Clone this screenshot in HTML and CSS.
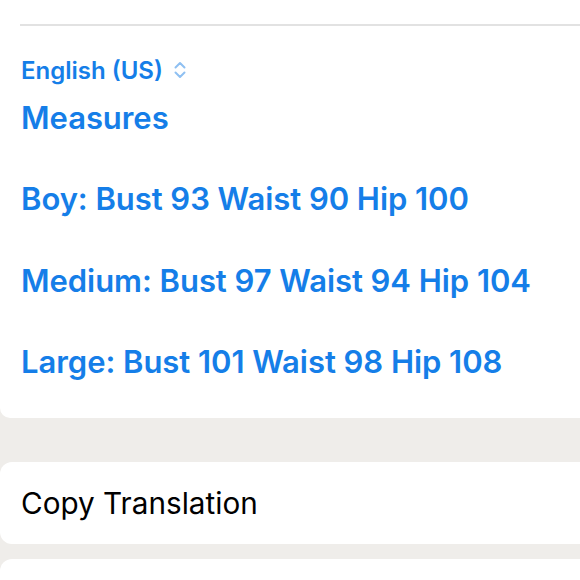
FILE: index.html
```html
<!DOCTYPE html>
<html>
<head>
<meta charset="utf-8">
<link rel="stylesheet" href="styles.css">
</head>
<body>
<div class="page">
  <section class="card top">
    <div class="divider"></div>
    <div class="lang">
      <span>English (US)</span>
      <svg class="chev" width="14" height="20" viewBox="0 0 14 20">
        <path d="M2.5 7.5 L7 3 L11.5 7.5" fill="none" stroke="#8fc0f2" stroke-width="2" stroke-linecap="round" stroke-linejoin="round"/>
        <path d="M2.5 12.5 L7 17 L11.5 12.5" fill="none" stroke="#8fc0f2" stroke-width="2" stroke-linecap="round" stroke-linejoin="round"/>
      </svg>
    </div>
    <div class="translation">
      <p>Measures</p>
      <p class="blank">&nbsp;</p>
      <p>Boy: Bust 93 Waist 90 Hip 100</p>
      <p class="blank">&nbsp;</p>
      <p>Medium: Bust 97 Waist 94 Hip 104</p>
      <p class="blank">&nbsp;</p>
      <p>Large: Bust 101 Waist 98 Hip 108</p>
    </div>
  </section>
  <section class="card action">
    <span>Copy Translation</span>
  </section>
  <section class="card next"></section>
</div>
</body>
</html>
```
FILE: styles.css
```css
html, body {
  margin: 0;
  padding: 0;
  background: #efedea;
  height: 100%;
  overflow: hidden;
}
.page {
  display: flex;
  flex-direction: column;
  width: 580px;
  height: 580px;
  font-family: Inter, "Liberation Sans", sans-serif;
}
.card {
  background: #ffffff;
  margin-right: -20px;
}
.top {
  height: 418px;
  border-radius: 0 0 10px 10px;
  padding-left: 21px;
  box-sizing: border-box;
  padding-top: 24px;
}
.divider {
  height: 1.5px;
  background: #e2e2e2;
  margin-left: -1px;
}
.lang {
  display: flex;
  align-items: center;
  gap: 10px;
  margin-top: 30.5px;
  height: 28px;
  color: #157ee8;
  font-size: 24px;
  font-weight: 600;
  letter-spacing: 0;
}
.chev {
  display: block;
}
.translation {
  margin-top: 13.6px;
  color: #157ee8;
  font-size: 31px;
  font-weight: 600;
  letter-spacing: -0.05px;
}
.translation p {
  margin: 0;
  line-height: 40.8px;
  white-space: nowrap;
}
.action {
  margin-top: 44px;
  height: 82px;
  border-radius: 12px;
  display: flex;
  align-items: center;
  padding-left: 21px;
  font-size: 29.7px;
  color: #000;
  font-weight: 400;
}
.next {
  margin-top: 15px;
  flex: 1;
  border-radius: 12px 12px 0 0;
}
```
